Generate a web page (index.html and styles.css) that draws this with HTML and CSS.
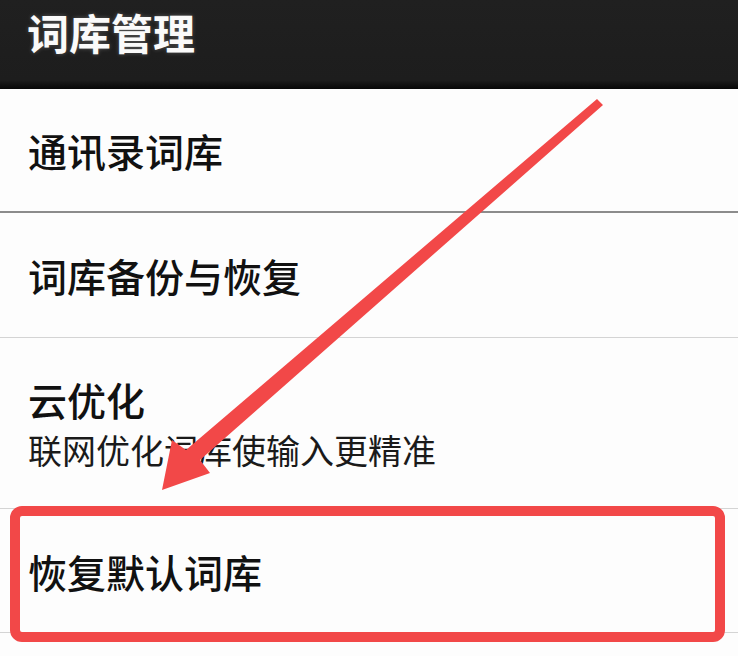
FILE: index.html
```html
<!DOCTYPE html>
<html lang="zh-CN">
<head>
<meta charset="utf-8">
<title>词库管理</title>
<link rel="stylesheet" href="styles.css">
</head>
<body>
<div class="page">
  <header class="appbar">
    <h1 class="appbar-title">词库管理</h1>
  </header>
  <ul class="list">
    <li class="item item-first"><span class="item-title">通讯录词库</span></li>
    <li class="item"><span class="item-title">词库备份与恢复</span></li>
    <li class="item item-tall">
      <span class="item-title">云优化</span>
      <span class="item-sub">联网优化词库使输入更精准</span>
    </li>
    <li class="item"><span class="item-title">恢复默认词库</span></li>
  </ul>
  <svg class="annotation" width="738" height="656" viewBox="0 0 738 656" aria-hidden="true">
    <rect class="mark-box" x="15" y="511" width="705" height="126" rx="7" ry="7"/>
    <polygon class="mark-arrow" points="597,99 603,105 200,460 210,473 162,490 172,440 186,450"/>
  </svg>
</div>
</body>
</html>
```
FILE: styles.css
```css
html, body {
  margin: 0;
  padding: 0;
  background: #fdfdfd;
}

.page {
  position: relative;
  width: 738px;
  height: 656px;
  overflow: hidden;
  font-family: "Noto Sans CJK SC", "Noto Sans", sans-serif;
  color: #111;
}

.appbar {
  height: 89px;
  box-sizing: border-box;
  background: linear-gradient(to bottom, #202020 0%, #1d1d1d 90%, #070707 100%);
  padding: 8px 0 0 27px;
}

.appbar-title {
  margin: 0;
  font-size: 42px;
  line-height: 48px;
  font-weight: 700;
  color: #fafafa;
  text-shadow: 0 0 4px rgba(255, 255, 255, 0.25);
}

.list {
  list-style: none;
  margin: 0;
  padding: 0;
}

.item {
  display: flex;
  flex-direction: column;
  justify-content: center;
  box-sizing: border-box;
  height: 124px;
  padding-left: 28px;
  border-bottom: 1px solid #d4d4d4;
}

.item + .item {
  height: 125px;
}

.item-first {
  border-bottom: 2px solid #8c8c8c;
}

.item-tall.item {
  height: 171px;
  justify-content: flex-start;
  padding-top: 36px;
}

.item:last-child {
  height: 124px;
}

.item-title {
  font-size: 39px;
  line-height: 50px;
  font-weight: 500;
}

.item-sub {
  font-size: 34px;
  line-height: 52px;
  font-weight: 400;
  color: #1a1a1a;
}

.annotation {
  position: absolute;
  top: 0;
  left: 0;
  pointer-events: none;
}

.mark-box {
  fill: none;
  stroke: #f24848;
  stroke-width: 10;
}

.mark-arrow {
  fill: #f24848;
}
```
